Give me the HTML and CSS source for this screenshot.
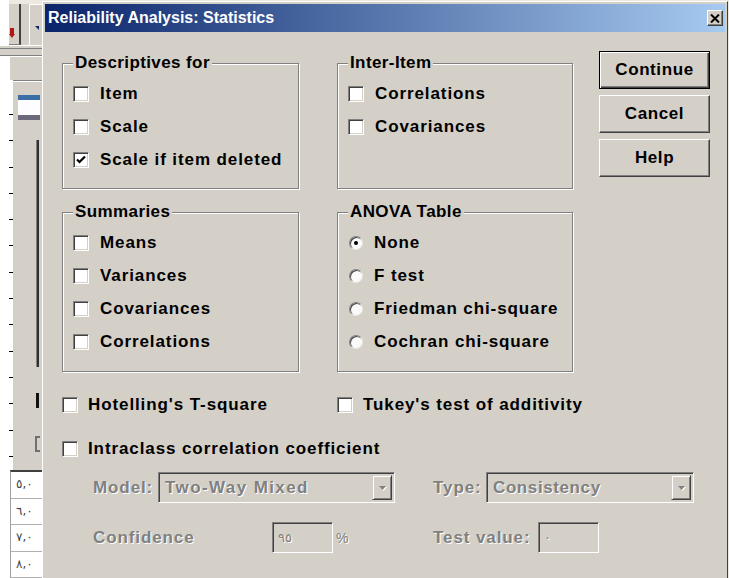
FILE: index.html
```html
<!DOCTYPE html>
<html lang="en">
<head>
<meta charset="utf-8">
<title>Reliability Analysis: Statistics</title>
<link rel="stylesheet" href="styles.css">
</head>
<body>
  <!-- data editor window behind the dialog -->
  <div class="bgapp">
    <div class="bg-strip"></div>
    <div class="bg-toolbar">
      <div class="bg-gutter"></div>
      <div class="bg-tool bg-tool-a">
        <svg class="bg-icon-red" width="8" height="10" viewBox="0 0 8 10"><path d="M1 0v6h-1l3 4 3-4h-1v-6z" fill="#b01818"/></svg>
      </div>
      <div class="bg-tool bg-tool-b">
        <svg class="bg-icon-blue" width="4" height="4" viewBox="0 0 4 4"><path d="M0 0h4v4z" fill="#0a246a"/></svg>
      </div>
    </div>
    <div class="bg-rules"></div>
    <div class="bg-body">
      <div class="bg-ruler"></div>
      <div class="bg-pane">
        <div class="bg-box"></div>
        <div class="bg-vline"></div>
        <div class="bg-stroke"></div>
        <div class="bg-bracket"></div>
      </div>
    </div>
    <div class="bg-table">
      <div class="bg-cell">٥,٠</div>
      <div class="bg-cell">٦,٠</div>
      <div class="bg-cell">٧,٠</div>
      <div class="bg-cell">٨,٠</div>
    </div>
  </div>

  <div class="dialog">
    <div class="titlebar">
      <span class="title">Reliability Analysis: Statistics</span>
      <span class="close">
        <svg width="10" height="9" viewBox="0 0 10 9"><path d="M1 0.5l8 8M9 0.5l-8 8" stroke="#000" stroke-width="2"/></svg>
      </span>
    </div>

    <div class="content">
      <div class="top">
        <div class="groups">
          <div class="group short">
            <span class="group-title">Descriptives for</span>
            <div class="opt"><span class="cb"></span>Item</div>
            <div class="opt"><span class="cb"></span>Scale</div>
            <div class="opt"><span class="cb"><svg width="14" height="14" viewBox="0 0 14 14"><path d="M3 6.5l2.5 2.5 5.5-5.5" fill="none" stroke="#000" stroke-width="2.2"/></svg></span>Scale if item deleted</div>
          </div>
          <div class="group short">
            <span class="group-title">Inter-Item</span>
            <div class="opt"><span class="cb"></span>Correlations</div>
            <div class="opt"><span class="cb"></span>Covariances</div>
          </div>
          <div class="group tall">
            <span class="group-title">Summaries</span>
            <div class="opt"><span class="cb"></span>Means</div>
            <div class="opt"><span class="cb"></span>Variances</div>
            <div class="opt"><span class="cb"></span>Covariances</div>
            <div class="opt"><span class="cb"></span>Correlations</div>
          </div>
          <div class="group tall">
            <span class="group-title">ANOVA Table</span>
            <div class="opt"><span class="rb on"></span>None</div>
            <div class="opt"><span class="rb"></span>F test</div>
            <div class="opt"><span class="rb"></span>Friedman chi-square</div>
            <div class="opt"><span class="rb"></span>Cochran chi-square</div>
          </div>
        </div>
        <div class="buttons">
          <button class="btn default">Continue</button>
          <button class="btn">Cancel</button>
          <button class="btn">Help</button>
        </div>
      </div>

      <div class="pair row-a">
        <div class="opt"><span class="cb"></span>Hotelling's T-square</div>
        <div class="opt"><span class="cb"></span>Tukey's test of additivity</div>
      </div>
      <div class="row-b">
        <div class="opt"><span class="cb"></span>Intraclass correlation coefficient</div>
      </div>

      <div class="form-row row-c">
        <div class="half">
          <span class="dim lbl-model">Model:</span>
          <span class="combo combo-model"><span class="dim combo-text wide">Two-Way Mixed</span><span class="combo-btn"><svg width="7" height="4" viewBox="0 0 7 4"><path d="M0 0h7l-3.5 4z" fill="#808080"/></svg></span></span>
        </div>
        <div class="half">
          <span class="dim lbl-type">Type:</span>
          <span class="combo combo-type"><span class="dim combo-text">Consistency</span><span class="combo-btn"><svg width="7" height="4" viewBox="0 0 7 4"><path d="M0 0h7l-3.5 4z" fill="#808080"/></svg></span></span>
        </div>
      </div>
      <div class="form-row row-d">
        <div class="half">
          <span class="dim lbl-conf">Confidence</span>
          <span class="field">٩٥</span>
          <span class="dim pct">%</span>
        </div>
        <div class="half">
          <span class="dim lbl-test">Test value:</span>
          <span class="field">٠</span>
        </div>
      </div>
    </div>
  </div>
</body>
</html>
```

FILE: styles.css
```css
* { box-sizing: border-box; }

html, body { margin: 0; padding: 0; }

body {
  width: 729px;
  height: 578px;
  overflow: hidden;
  display: flex;
  align-items: flex-start;
  background: #ece9e1;
  font-family: "Liberation Sans", Arial, sans-serif;
}

/* ---------- background editor window ---------- */
.bgapp {
  width: 42px;
  height: 578px;
  flex: none;
  display: flex;
  flex-direction: column;
  background: linear-gradient(to right, #fff 10px, #d4d0c8 10px);
}

.bg-strip { height: 4px; background: linear-gradient(to right, #fff 9px, #ece9e1 9px); }

.bg-toolbar { height: 43px; display: flex; }
.bg-gutter { width: 9px; background: #fff; }
.bg-tool {
  display: flex;
  align-items: flex-end;
  background: #d4d0c8;
}
.bg-tool-a {
  width: 12px;
  border-right: 2px solid #404040;
  border-bottom: 1px solid #808080;
  padding-bottom: 6px;
}
.bg-tool-b {
  width: 13px;
  margin-left: 8px;
  border-left: 1px solid #fff;
  border-top: 1px solid #fff;
  padding: 0 0 15px 5px;
}

.bg-rules {
  height: 36px;
  background: linear-gradient(to bottom,
    #fff 0 1px, #d4d0c8 1px 3px, #808080 3px 4px,
    #d4d0c8 4px 10px, #808080 10px 11px, #fff 11px 12px,
    transparent 12px);
}

.bg-body { height: 404px; display: flex; }
.bg-ruler {
  width: 13px;
  background: #fff repeating-linear-gradient(to bottom, #000 0 1px, transparent 1px 26.3px) right 0 top 34px / 4px 370px no-repeat;
}
.bg-pane {
  flex: 1;
  display: flex;
  flex-direction: column;
  align-items: flex-start;
  background: #d4d0c8;
  border-top: 1px solid #808080;
  box-shadow: inset 0 1px 0 #fff;
  padding-left: 5px;
}
.bg-box {
  width: 22px;
  height: 25px;
  margin-top: 14px;
  background: #fdfdff;
  border-top: 5px solid #3a6ea5;
  border-bottom: 5px solid #6a6a7c;
}
.bg-vline {
  width: 3px;
  height: 227px;
  margin: 20px 0 0 18px;
  border-left: 1px solid #808080;
  border-right: 2px solid #303030;
}
.bg-stroke {
  width: 3px;
  height: 15px;
  margin: 26px 0 0 18px;
  background: #111;
}
.bg-bracket {
  width: 5px;
  height: 16px;
  margin: 28px 0 0 17px;
  border: 2px solid #707070;
  border-right: none;
}

.bg-table {
  flex: 1;
  background: #fff;
  border-top: 2px solid #404040;
  margin-left: 10px;
  border-left: 1px solid #a0a0a0;
}
.bg-cell {
  height: 26.5px;
  padding-left: 5px;
  border-bottom: 1px solid #b0b0b0;
  font-family: "DejaVu Sans", sans-serif;
  font-size: 12px;
  line-height: 25px;
  color: #444;
}

/* ---------- dialog window ---------- */
.dialog {
  width: 686px;
  height: 577px;
  flex: none;
  margin-top: 1px;
  background: #d4d0c8;
  border: 1px solid;
  border-bottom: none;
  border-color: #fff #404040 #404040 #fff;
  padding: 2px;
  overflow: hidden;
}

.titlebar {
  height: 28px;
  display: flex;
  align-items: center;
  justify-content: space-between;
  padding: 0 2px 0 3px;
  background: linear-gradient(to right, #0a246a, #a6caf0);
  color: #fff;
  font-weight: bold;
  font-size: 16px;
}
.close {
  width: 16px;
  height: 16px;
  display: flex;
  align-items: center;
  justify-content: center;
  background: #d4d0c8;
  border: 1px solid;
  border-color: #fff #404040 #404040 #fff;
  box-shadow: inset -1px -1px 0 #808080;
}

.content {
  padding: 19px 0 0 17px;
  font-size: 17px;
  font-weight: bold;
  letter-spacing: 0.9px;
  color: #000;
}

.top { display: flex; align-items: flex-start; }

.groups {
  display: grid;
  grid-template-columns: 237px 236px;
  column-gap: 38px;
  row-gap: 23px;
  margin-top: 12px;
}

.group {
  position: relative;
  border: 1px solid #808080;
  box-shadow: 1px 1px 0 #fff, inset 1px 1px 0 #fff;
  padding: 13px 0 0 10px;
}
.group.short { height: 126px; }
.group.tall { height: 160px; }

.group-title {
  position: absolute;
  top: -10px;
  left: 10px;
  padding: 0 2px;
  line-height: 18px;
  letter-spacing: 0.4px;
  background: #d4d0c8;
}

.opt {
  height: 33px;
  display: flex;
  align-items: center;
  white-space: nowrap;
}

.cb {
  width: 16px;
  height: 16px;
  flex: none;
  margin-right: 11px;
  background: #fff;
  border: 1px solid;
  border-color: #808080 #fff #fff #808080;
  box-shadow: inset 1px 1px 0 #404040, inset -1px -1px 0 #d4d0c8;
}
.cb svg { display: block; }

.rb {
  width: 14px;
  height: 14px;
  flex: none;
  margin: 0 11px 0 1px;
  display: flex;
  align-items: center;
  justify-content: center;
  border-radius: 50%;
  background: #fafafa;
  border: 1px solid;
  border-color: #808080 #e8e6e0 #e8e6e0 #808080;
  box-shadow: inset 1px 1px 0 #404040;
}
.rb.on::after {
  content: "";
  width: 4px;
  height: 4px;
  border-radius: 50%;
  background: #000;
}

.buttons {
  margin-left: 26px;
  display: flex;
  flex-direction: column;
  gap: 6px;
}
.btn {
  width: 111px;
  height: 38px;
  padding: 0;
  font: inherit;
  letter-spacing: 0.6px;
  color: #000;
  background: #d4d0c8;
  border: 1px solid;
  border-color: #fff #404040 #404040 #fff;
  box-shadow: inset -1px -1px 0 #808080;
}
.btn.default {
  border: 1px solid #000;
  box-shadow: inset 1px 1px 0 #fff, inset -1px -1px 0 #404040, inset -2px -2px 0 #808080;
}

.pair {
  display: grid;
  grid-template-columns: 275px auto;
}
.pair .opt, .row-b .opt { height: 30px; }
.pair .cb, .row-b .cb { margin-right: 10px; }

.row-a { margin-top: 18px; }
.row-b { margin-top: 14px; }

.form-row {
  height: 31px;
  display: flex;
  align-items: center;
  padding-left: 31px;
}
.row-c { margin-top: 8px; }
.row-d { margin-top: 19px; }

.half { display: flex; align-items: center; height: 31px; }
.half:first-child { width: 340px; }

.dim { color: #808080; text-shadow: 1px 1px 0 #fff; }

.lbl-model { width: 65px; }
.lbl-type { width: 53px; }
.lbl-conf { width: 179px; }
.lbl-test { width: 105px; }

.combo {
  height: 31px;
  display: flex;
  align-items: center;
  padding: 2px;
  border: 1px solid;
  border-color: #808080 #fff #fff #808080;
  box-shadow: inset 1px 1px 0 #404040, inset -1px -1px 0 #d4d0c8;
}
.combo-model { width: 237px; }
.combo-type { width: 208px; }
.combo-text { padding-left: 4px; letter-spacing: 0.6px; }
.combo-text.wide { letter-spacing: 1.4px; }
.combo-btn {
  margin-left: auto;
  width: 20px;
  height: 100%;
  display: flex;
  align-items: center;
  justify-content: center;
  background: #d4d0c8;
  border: 1px solid;
  border-color: #d4d0c8 #404040 #404040 #d4d0c8;
  box-shadow: inset 1px 1px 0 #fff, inset -1px -1px 0 #808080;
}
.combo-btn svg { filter: drop-shadow(1px 1px 0 #fff); }

.field {
  width: 61px;
  height: 31px;
  display: flex;
  align-items: center;
  padding-left: 5px;
  font-family: "DejaVu Sans", sans-serif;
  font-weight: normal;
  font-size: 13px;
  letter-spacing: 1px;
  color: #808080;
  text-shadow: 1px 1px 0 #fff;
  border: 1px solid;
  border-color: #808080 #fff #fff #808080;
  box-shadow: inset 1px 1px 0 #404040, inset -1px -1px 0 #d4d0c8;
}
.pct { margin-left: 3px; font-size: 14px; font-weight: normal; }
```
